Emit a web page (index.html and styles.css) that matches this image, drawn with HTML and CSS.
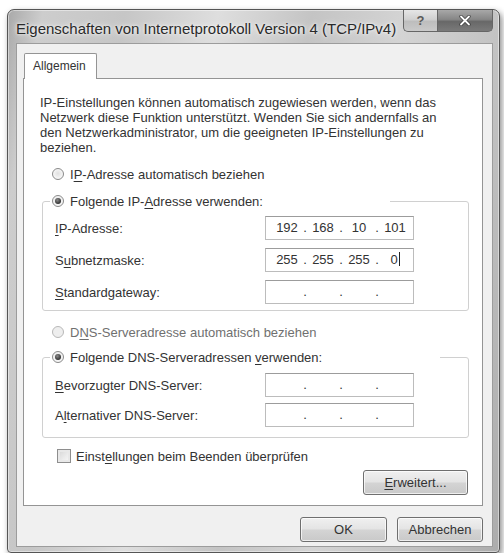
FILE: index.html
```html
<!DOCTYPE html>
<html lang="de">
<head>
<meta charset="utf-8">
<title>Eigenschaften von Internetprotokoll Version 4 (TCP/IPv4)</title>
<link rel="stylesheet" href="styles.css">
</head>
<body>
<div class="window">
  <div class="titlebar">
    <span class="title">Eigenschaften von Internetprotokoll Version 4 (TCP/IPv4)</span>
    <div class="caption">
      <div class="cbtn help">?</div>
      <div class="cbtn close">
        <svg width="12" height="11" viewBox="0 0 12 11"><path d="M2 1.5 L10 9.5 M10 1.5 L2 9.5" stroke="#3a3a3a" stroke-width="3.2" stroke-linecap="round"/><path d="M2 1.5 L10 9.5 M10 1.5 L2 9.5" stroke="#ffffff" stroke-width="1.8" stroke-linecap="round"/></svg>
      </div>
    </div>
  </div>
  <div class="client">
    <div class="tabs"><div class="tab">Allgemein</div></div>
    <div class="panel">
      <p class="desc">IP-Einstellungen können automatisch zugewiesen werden, wenn das<br>Netzwerk diese Funktion unterstützt. Wenden Sie sich andernfalls an<br>den Netzwerkadministrator, um die geeigneten IP-Einstellungen zu<br>beziehen.</p>
      <div class="radio-row first"><span class="radio"></span><span>I<u>P</u>-Adresse automatisch beziehen</span></div>
      <fieldset class="group g1">
        <legend><span class="radio-row"><span class="radio on"></span><span>Folgende IP-<u>A</u>dresse verwenden:</span></span></legend>
        <div class="field first"><span class="label"><u>I</u>P-Adresse:</span>
          <div class="ip"><span class="oct">192</span><span class="dot">.</span><span class="oct">168</span><span class="dot">.</span><span class="oct">10</span><span class="dot">.</span><span class="oct">101</span></div></div>
        <div class="field"><span class="label">S<u>u</u>bnetzmaske:</span>
          <div class="ip"><span class="oct">255</span><span class="dot">.</span><span class="oct">255</span><span class="dot">.</span><span class="oct">255</span><span class="dot">.</span><span class="oct">0<span class="caret"></span></span></div></div>
        <div class="field"><span class="label"><u>S</u>tandardgateway:</span>
          <div class="ip"><span class="oct"></span><span class="dot">.</span><span class="oct"></span><span class="dot">.</span><span class="oct"></span><span class="dot">.</span><span class="oct"></span></div></div>
      </fieldset>
      <div class="radio-row disabled"><span class="radio"></span><span>D<u>N</u>S-Serveradresse automatisch beziehen</span></div>
      <fieldset class="group g2">
        <legend><span class="radio-row"><span class="radio on"></span><span>Folgende DNS-Serveradressen <u>v</u>erwenden:</span></span></legend>
        <div class="field first"><span class="label"><u>B</u>evorzugter DNS-Server:</span>
          <div class="ip"><span class="oct"></span><span class="dot">.</span><span class="oct"></span><span class="dot">.</span><span class="oct"></span><span class="dot">.</span><span class="oct"></span></div></div>
        <div class="field tight"><span class="label">A<u>l</u>ternativer DNS-Server:</span>
          <div class="ip"><span class="oct"></span><span class="dot">.</span><span class="oct"></span><span class="dot">.</span><span class="oct"></span><span class="dot">.</span><span class="oct"></span></div></div>
      </fieldset>
      <div class="check-row"><span class="checkbox"></span><span>Einst<u>e</u>llungen beim Beenden überprüfen</span></div>
      <div class="adv-row"><button class="btn adv"><u>E</u>rweitert...</button></div>
    </div>
    <div class="buttons">
      <button class="btn ok">OK</button>
      <button class="btn cancel">Abbrechen</button>
    </div>
  </div>
</div>
</body>
</html>
```

FILE: styles.css
```css
* { box-sizing: border-box; }
html, body { margin: 0; padding: 0; background: #ffffff; }
body {
  font-family: "Liberation Sans", Arial, sans-serif;
  font-size: 13px;
  color: #333333;
}
u { text-decoration: underline; text-underline-offset: 2px; text-decoration-thickness: 1px; }

.window {
  margin: 9px 0 0 7px;
  width: 493px;
  height: 544px;
  border: 1px solid #555555;
  border-radius: 7px 7px 4px 4px;
  padding: 0 6px 5px 8px;
  display: flex;
  flex-direction: column;
  background: linear-gradient(100deg, #a9a9a9 0%, #cdcdcd 6%, #c6c6c6 20%, #dedede 36%, #c4c4c4 52%, #d4d4d4 68%, #c2c2c2 85%, #acacac 100%);
  box-shadow: 2px 3px 6px rgba(0,0,0,0.45), inset 0 0 0 1px rgba(255,255,255,0.45);
}

.titlebar {
  height: 33px;
  display: flex;
  justify-content: space-between;
  align-items: flex-start;
  flex: none;
}
.title {
  margin-top: 10px;
  line-height: 18px;
  font-size: 15px;
  color: #2a2a2a;
  white-space: nowrap;
  text-shadow: 0 0 6px #f0f0f0, 0 0 3px #ffffff;
}
.caption { display: flex; }
.cbtn {
  height: 22px;
  display: flex;
  align-items: center;
  justify-content: center;
  border: 1px solid #666666;
  border-top: none;
}
.help {
  width: 34px;
  border-right: none;
  border-radius: 0 0 0 5px;
  background: linear-gradient(180deg, #e6e6e6 0%, #d0d0d0 45%, #bdbdbd 55%, #cacaca 100%);
  color: #5a5a5a;
  font-weight: bold;
  font-size: 13px;
}
.close {
  width: 56px;
  border-radius: 0 0 5px 0;
  background: linear-gradient(180deg, #a8a8a8 0%, #868686 45%, #686868 55%, #7a7a7a 100%);
}

.client {
  flex: 1;
  background: #f0f0f0;
  border: 1px solid #9c9c9c;
  padding: 9px 9px 0 6px;
  display: flex;
  flex-direction: column;
}
.tabs { display: flex; flex: none; }
.tab {
  margin-left: 1px;
  width: 73px;
  height: 26px;
  margin-bottom: -1px;
  background: #ffffff;
  border: 1px solid #949494;
  border-bottom: none;
  border-radius: 2px 2px 0 0;
  padding: 6px 0 0 8px;
  font-size: 12px;
  line-height: 13px;
  color: #333333;
  position: relative;
  z-index: 1;
}

.panel {
  height: 428px;
  flex: none;
  background: #ffffff;
  border: 1px solid #949494;
  display: flex;
  flex-direction: column;
  padding: 0;
}
.desc {
  margin: 16px 0 0 16px;
  line-height: 15px;
  white-space: nowrap;
}

.radio-row {
  height: 20px;
  display: flex;
  align-items: center;
  white-space: nowrap;
}
.radio-row.first { margin: 9px 0 0 28px; }
.radio-row.disabled { margin: 11px 0 0 28px; color: #707070; }
.radio {
  width: 12px;
  height: 12px;
  border-radius: 50%;
  border: 1px solid #8a8a8a;
  background: radial-gradient(circle at 50% 45%, #e0e0e0 0%, #f4f4f4 60%, #ffffff 100%);
  margin-right: 6px;
  flex: none;
  display: flex;
  align-items: center;
  justify-content: center;
}
.radio.on::after {
  content: "";
  width: 6px;
  height: 6px;
  border-radius: 50%;
  background: radial-gradient(circle at 40% 35%, #8a8a8a 0%, #333333 70%);
}
.disabled .radio { border-color: #b8b8b8; background: #eeeeee; }

.group {
  margin: 7px 0 0 18px;
  padding: 0 0 6px 0;
  width: 427px;
  min-inline-size: 0;
  border: 1px solid #d0d0d0;
  border-radius: 3px;
}
.group.g2 { margin-top: 5px; padding-bottom: 10px; }
.group legend {
  padding: 0 0 0 2px;
  margin-left: 7px;
}
.g1 legend { width: 340px; }
.g2 legend { width: 390px; }

.field {
  display: flex;
  align-items: center;
  margin: 8px 0 0 12px;
  height: 24px;
}
.field.first { margin-top: 5px; }
.g2 .field.first { margin-top: 6px; }
.field.tight { margin-top: 6px; }
.label { width: 210px; flex: none; white-space: nowrap; }
.ip {
  width: 149px;
  height: 24px;
  border: 1px solid #bcbcbc;
  border-top-color: #9c9c9c;
  background: #ffffff;
  display: flex;
  align-items: center;
  padding-left: 7px;
}
.oct {
  width: 28px;
  text-align: center;
  line-height: 16px;
  height: 16px;
}
.dot { width: 8px; text-align: center; line-height: 16px; }
.caret {
  display: inline-block;
  width: 1px;
  height: 14px;
  background: #222;
  vertical-align: -2px;
  margin-left: 1px;
}

.check-row {
  margin: 8px 0 0 33px;
  height: 20px;
  display: flex;
  align-items: center;
  white-space: nowrap;
}
.checkbox {
  width: 14px;
  height: 14px;
  border: 1px solid #8e8e8e;
  background: linear-gradient(135deg, #d4d4d4 0%, #ececec 60%, #f8f8f8 100%);
  box-shadow: inset 0 0 0 2px #e8e8e8;
  margin-right: 5px;
  flex: none;
}

.adv-row { display: flex; justify-content: flex-end; margin: 4px 14px 0 0; }
.btn {
  height: 25px;
  font-family: "Liberation Sans", Arial, sans-serif;
  font-size: 13px;
  color: #333333;
  border: 1px solid #6f6f6f;
  border-radius: 3px;
  background: linear-gradient(180deg, #f0f0f0 0%, #e4e4e4 48%, #d4d4d4 52%, #c9c9c9 100%);
  box-shadow: inset 0 0 0 1px rgba(255,255,255,0.7);
  padding: 0;
}
.adv { width: 105px; }
.buttons {
  display: flex;
  justify-content: flex-end;
  gap: 10px;
  margin-top: 11px;
}
.ok { width: 87px; }
.cancel { width: 86px; }
```
